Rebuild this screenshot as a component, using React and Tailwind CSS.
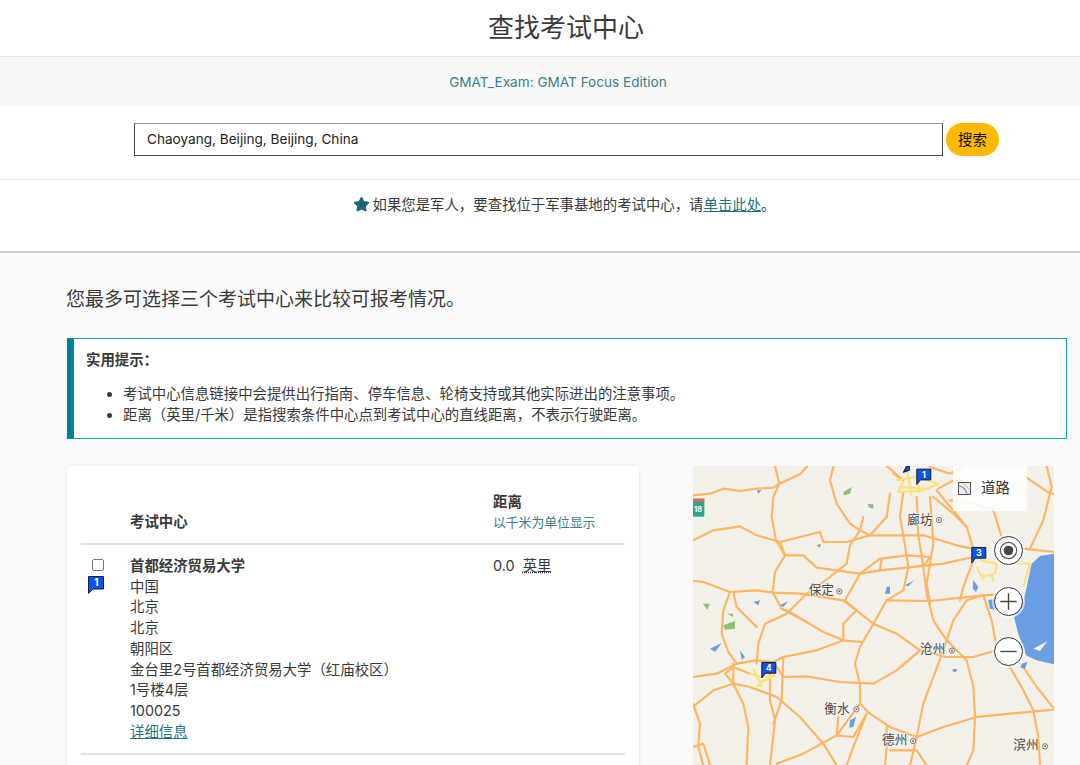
import React from "react";
import { Star } from "lucide-react";

const FONT = '"Inter","Noto Sans CJK SC",sans-serif';

const roads = [
  "255,17 268,70 250,110 245,170 258,240 285,285 255,335 248,395 275,445 350,485 400,515 460,540 515,545",
  "9,105 60,100 100,85 150,92 200,85 250,82 268,70 330,42 352,17",
  "9,240 70,210 150,198 200,225 270,245 285,285 340,285 380,322 440,330 510,340 570,330 650,322 760,310 850,290",
  "270,245 390,215 400,245 470,245 540,225 640,225 700,225 800,255 860,268",
  "9,362 40,365 120,395 200,390 250,397 330,400 365,405 460,420 550,490 620,520 690,570 770,590 850,590 920,570",
  "120,395 100,450 95,520 115,575 140,610",
  "350,485 300,455 275,445",
  "350,400 290,460 225,490 205,550 200,610",
  "465,420 500,450 460,490 460,540 380,570 280,590 250,605",
  "430,20 420,60 440,130 480,190 510,210 540,225",
  "520,170 510,210 480,255 470,310 420,350 380,380 350,400",
  "600,100 590,170 540,225",
  "640,95 630,170 640,225 655,320 640,390 590,420 550,490 510,560 495,610 510,670 510,730 540,760 600,800 680,830 760,800 860,770 960,760 1092,748",
  "680,110 685,225 700,320 710,400 730,480 770,540 830,600 850,680 855,770 850,870 830,915",
  "720,110 730,250 710,370 720,430",
  "740,90 830,200 850,265",
  "590,420 720,422 880,405 960,400",
  "880,405 830,420 790,480 770,540 745,610 700,730 680,830 660,915",
  "9,650 80,640 140,610 200,600 250,605 280,650 350,648 450,665 550,670 620,630 690,570",
  "9,740 70,690 130,670 180,680 260,710 330,770 400,850 440,915",
  "130,610 130,670 160,730 175,800 170,915",
  "240,640 240,720 255,780 240,915",
  "280,590 275,720 250,790",
  "260,910 340,880 440,825 510,730",
  "440,825 445,770 440,825 490,830 530,760 490,860 470,915",
  "590,800 590,860 585,915",
  "600,870 680,870 710,915",
  "880,405 905,480 920,560 960,620 1000,690 1030,750 1045,830 1050,915",
  "1000,620 1040,680 1092,745",
  "1000,45 1080,100 1092,100",
  "780,120 850,130 910,150 935,230 1000,265 1092,275",
  "1070,17 1085,80 1060,180 1020,265",
  "9,730 30,790 25,860 40,915",
  "130,395 140,440 200,500",
  "9,860 40,850 60,915",
  "570,330 575,295 650,285 720,290 700,320",
  "720,20 780,40 820,17",
  "850,300 820,380 810,420",
  "570,295 510,340 465,420",
  "745,85 790,60 830,70",
  "610,40 640,60 590,17",
  "730,110 790,160 830,200",
  "180,640 130,620 105,640 130,670",
];

const cityYellow = [
  "620,60 680,50 745,70 700,90 625,95 640,65",
  "650,25 665,105",
  "680,45 690,100",
  "625,80 720,85",
  "870,300 920,310 915,340 875,350 860,320",
  "880,340 880,360",
  "905,340 910,365",
  "985,310 1020,310 1000,380",
  "180,640 215,650 255,645 215,665 200,680",
  "190,625 215,680",
];

const water = [
  "190,425 210,420 205,435",
  "270,435 295,422 280,440",
  "150,570 165,590 155,598",
  "60,565 95,548 75,575",
  "480,780 498,770 490,800 478,802",
  "590,380 600,378 600,400 585,400",
  "645,375 672,360 655,378",
  "788,626 800,626 800,634 788,634",
  "200,90 215,90 205,100",
  "380,255 392,250 390,262",
  "850,360 865,380 858,395 848,385",
  "995,610 1012,605 1005,625 992,622",
];

const green = [
  "460,95 485,80 480,100 462,105",
  "532,130 550,132 550,145 538,142",
  "38,430 60,430 52,448",
  "112,460 130,460 128,470",
  "100,495 135,482 135,505 105,508",
];

function Flag({ n, className }) {
  return (
    <svg viewBox="0 0 16 18" className={className}>
      <path d="M0.5 0.5H15.5V13H5L0.5 17.5Z" fill="#0a55f0" stroke="#10213f" strokeWidth="1" />
      <text x="8.5" y="10" textAnchor="middle" fontSize="10" fontWeight="700" fill="#fff" fontFamily={FONT}>{n}</text>
    </svg>
  );
}

function MapFlag({ n, x, y }) {
  return (
    <g transform={`translate(${x} ${y}) scale(2.8)`}>
      <path d="M0.5 0.5H15.5V12H4.5L0.5 17Z" fill="#0a55f0" stroke="#111" strokeWidth="1" />
      <text x="8" y="9.6" textAnchor="middle" fontSize="9.5" fontWeight="700" fill="#fff" fontFamily={FONT}>{n}</text>
    </g>
  );
}

function City({ name, x, y, cx, cy }) {
  return (
    <g>
      <text x={x} y={y} fontSize="38" fill="#4a4a4a" stroke="#f3f1e9" strokeWidth="5" paintOrder="stroke" fontFamily={FONT}>{name}</text>
      <circle cx={cx} cy={cy} r="8" fill="#f3f1e9" stroke="#666" strokeWidth="2.5" />
      <circle cx={cx} cy={cy} r="3" fill="#666" />
    </g>
  );
}

function MapControl({ children }) {
  return (
    <div className="w-[29px] h-[29px] rounded-full bg-white border-[1.5px] border-[#333] flex items-center justify-center shadow-[0_0_0_2px_rgba(255,255,255,0.6)]">
      {children}
    </div>
  );
}

function MapPanel() {
  return (
    <div className="relative w-[361px] h-[299px] overflow-hidden shrink-0">
      <svg viewBox="9 17 1083 897" className="block w-[361px] h-[299px]">
        <rect x="9" y="17" width="1083" height="897" fill="#f3f1e9" />
        {roads.map((p) => (
          <polyline key={p} points={p} fill="none" stroke="#ffb562" strokeWidth="6.5" strokeLinejoin="round" strokeLinecap="round" />
        ))}
        <path d="M1092 280L1050 287L1025 310L1012 370L1000 425L972 470L985 520L1008 585L1040 600L1092 612Z" fill="#6a9fe3" />
        <polygon points="1030,565 1072,543 1050,572" fill="#f3f1e9" />
        <path d="M895 420L925 412L925 450L900 445Z" fill="#6a9fe3" />
        {water.map((p) => <polygon key={p} points={p} fill="#6a9fe3" />)}
        {green.map((p) => <polygon key={p} points={p} fill="#8fbf78" />)}
        {cityYellow.map((p) => (
          <polyline key={p} points={p} fill="none" stroke="#fbe27e" strokeWidth="6.5" strokeLinejoin="round" />
        ))}
        <rect x="9" y="115" width="34" height="54" rx="3" fill="#2fa58a" />
        <rect x="9" y="115" width="34" height="9" fill="#d96a5a" />
        <text x="12" y="154" fontSize="22" fontWeight="700" fill="#fff" fontFamily={FONT}>18</text>
        <City name="廊坊" x="652" y="191" cx="747" cy="179" />
        <City name="保定" x="356" y="401" cx="448" cy="393" />
        <City name="沧州" x="690" y="578" cx="786" cy="571" />
        <City name="衡水" x="403" y="758" cx="499" cy="747" />
        <City name="德州" x="576" y="850" cx="669" cy="842" />
        <City name="滨州" x="970" y="866" cx="1065" cy="858" />
        <path d="M640 36L650 17H658V30Z" fill="#0a55f0" stroke="#111" strokeWidth="3" />
        <MapFlag n="1" x="679" y="25" />
        <MapFlag n="3" x="844" y="260" />
        <MapFlag n="4" x="214" y="605" />
      </svg>
      <div className="absolute top-0 left-[260px] w-[74px] h-[45px] bg-white/85 flex items-center gap-[10px] pl-[5px]">
        <svg viewBox="0 0 13 13" className="w-[13px] h-[13px]">
          <rect x="0.5" y="0.5" width="12" height="12" fill="#eee" stroke="#555" />
          <path d="M1 4C5 4 8 8 9 12" stroke="#b08fc0" strokeWidth="1.5" fill="none" />
          <path d="M5 1L12 8" stroke="#bbb" strokeWidth="1" fill="none" />
        </svg>
        <span className="text-[14.4px] text-[#333] leading-none">道路</span>
      </div>
      <div className="absolute top-[70px] left-[301px] flex flex-col gap-[21.5px]">
        <MapControl>
          <svg viewBox="0 0 26 26" className="w-[25px] h-[25px]">
            <circle cx="13" cy="13" r="8.5" fill="none" stroke="#555" strokeWidth="1.2" />
            <circle cx="13" cy="13" r="5" fill="#444" />
          </svg>
        </MapControl>
        <MapControl>
          <svg viewBox="0 0 26 26" className="w-[25px] h-[25px]">
            <path d="M13 4.5V21.5M4.5 13H21.5" stroke="#444" strokeWidth="1.4" />
          </svg>
        </MapControl>
        <MapControl>
          <svg viewBox="0 0 26 26" className="w-[25px] h-[25px]">
            <path d="M4.5 13H21.5" stroke="#444" strokeWidth="1.4" />
          </svg>
        </MapControl>
      </div>
    </div>
  );
}

export default function App() {
  return (
    <div className="h-screen overflow-hidden bg-[#fafafa] text-[#3a3a3a] text-[14.4px]" style={{ fontFamily: FONT }}>
      <header className="bg-white h-[57px] border-b border-[#e6e6e6] flex items-center justify-center pl-[52px]">
        <h1 className="text-[26px] leading-none font-normal text-[#3a3a3a]">查找考试中心</h1>
      </header>

      <div className="h-[50px] bg-[#f8f8f8] flex items-center justify-center pl-[36px] pt-[1px] text-[13.6px] text-[#3b7f88]">
        GMAT_Exam: GMAT Focus Edition
      </div>

      <div className="bg-white h-[73px] border-b border-[#e6e6e6] flex pl-[134px] pt-[16px] gap-[3px]">
        <input
          readOnly
          value="Chaoyang, Beijing, Beijing, China"
          className="w-[809px] h-[33px] border border-[#4a4a4a] border-t-[#999] bg-white pl-[12px] pb-[1px] text-[13.6px] text-[#222] outline-none"
        />
        <button className="w-[53px] h-[33px] rounded-full bg-[#ffb900] text-[#111] text-[14.4px]">搜索</button>
      </div>

      <div className="bg-white h-[73px] border-b-2 border-[#cfcfcf] flex justify-center pt-[15px] pl-[48px]">
        <div className="flex items-start h-[20px] leading-[20px]">
          <Star className="w-[17px] h-[17px] mr-[3px] mt-[1px] text-[#1c6670]" fill="#1c6670" strokeWidth={1.5} />
          <span>
            如果您是军人，要查找位于军事基地的考试中心，请<span className="underline text-[#1f7480]">单击此处</span>。
          </span>
        </div>
      </div>

      <main className="pl-[67px] pr-[13px]">
        <p className="mt-[32px] -ml-[1px] text-[19px] leading-[30px] text-[#3a3a3a]">您最多可选择三个考试中心来比较可报考情况。</p>

        <section className="mt-[23px] h-[101px] w-[1000px] bg-white border border-[#1c9dba] border-l-[7px] border-l-[#007f9e] pl-[12px] pt-[11px]">
          <div className="font-bold leading-[20px]">实用提示：</div>
          <ul className="mt-[13px] ml-[37px] list-disc leading-[21px]">
            <li>考试中心信息链接中会提供出行指南、停车信息、轮椅支持或其他实际进出的注意事项。</li>
            <li>距离（英里/千米）是指搜索条件中心点到考试中心的直线距离，不表示行驶距离。</li>
          </ul>
        </section>

        <div className="mt-[27px] flex gap-[54px] items-start">
          <div className="w-[572px] shrink-0 bg-white rounded-[4px] shadow-[0_0_4px_rgba(0,0,0,0.08)] px-[14px] pb-[30px]">
            <div className="grid grid-cols-[49px_363px_1fr] h-[79px] border-b-2 border-[#e2e2e2] items-end pb-[11px]">
              <div />
              <div className="font-bold leading-[20px]">考试中心</div>
              <div>
                <div className="font-bold leading-[20px]">距离</div>
                <div className="text-[12.8px] leading-[18px] mt-[2px] text-[#3b7f88]">以千米为单位显示</div>
              </div>
            </div>
            <div className="grid grid-cols-[49px_363px_1fr] h-[210px] border-b-2 border-[#e2e2e2] pt-[11px]">
              <div className="flex flex-col pl-[7px]">
                <span className="mt-[3px] ml-[4px] w-[12px] h-[12px] rounded-[2px] border border-[#767676] bg-white" />
                <Flag n="1" className="mt-[5px] w-[16px] h-[18px]" />
              </div>
              <div className="leading-[20.7px]">
                <div className="font-bold">首都经济贸易大学</div>
                <div>中国</div>
                <div>北京</div>
                <div>北京</div>
                <div>朝阳区</div>
                <div>金台里2号首都经济贸易大学（红庙校区）</div>
                <div>1号楼4层</div>
                <div>100025</div>
                <div className="underline text-[#1f7480]">详细信息</div>
              </div>
              <div className="leading-[20.7px]">
                0.0&nbsp;&nbsp;<span className="underline decoration-dotted">英里</span>
              </div>
            </div>
          </div>
          <MapPanel />
        </div>
      </main>
    </div>
  );
}
